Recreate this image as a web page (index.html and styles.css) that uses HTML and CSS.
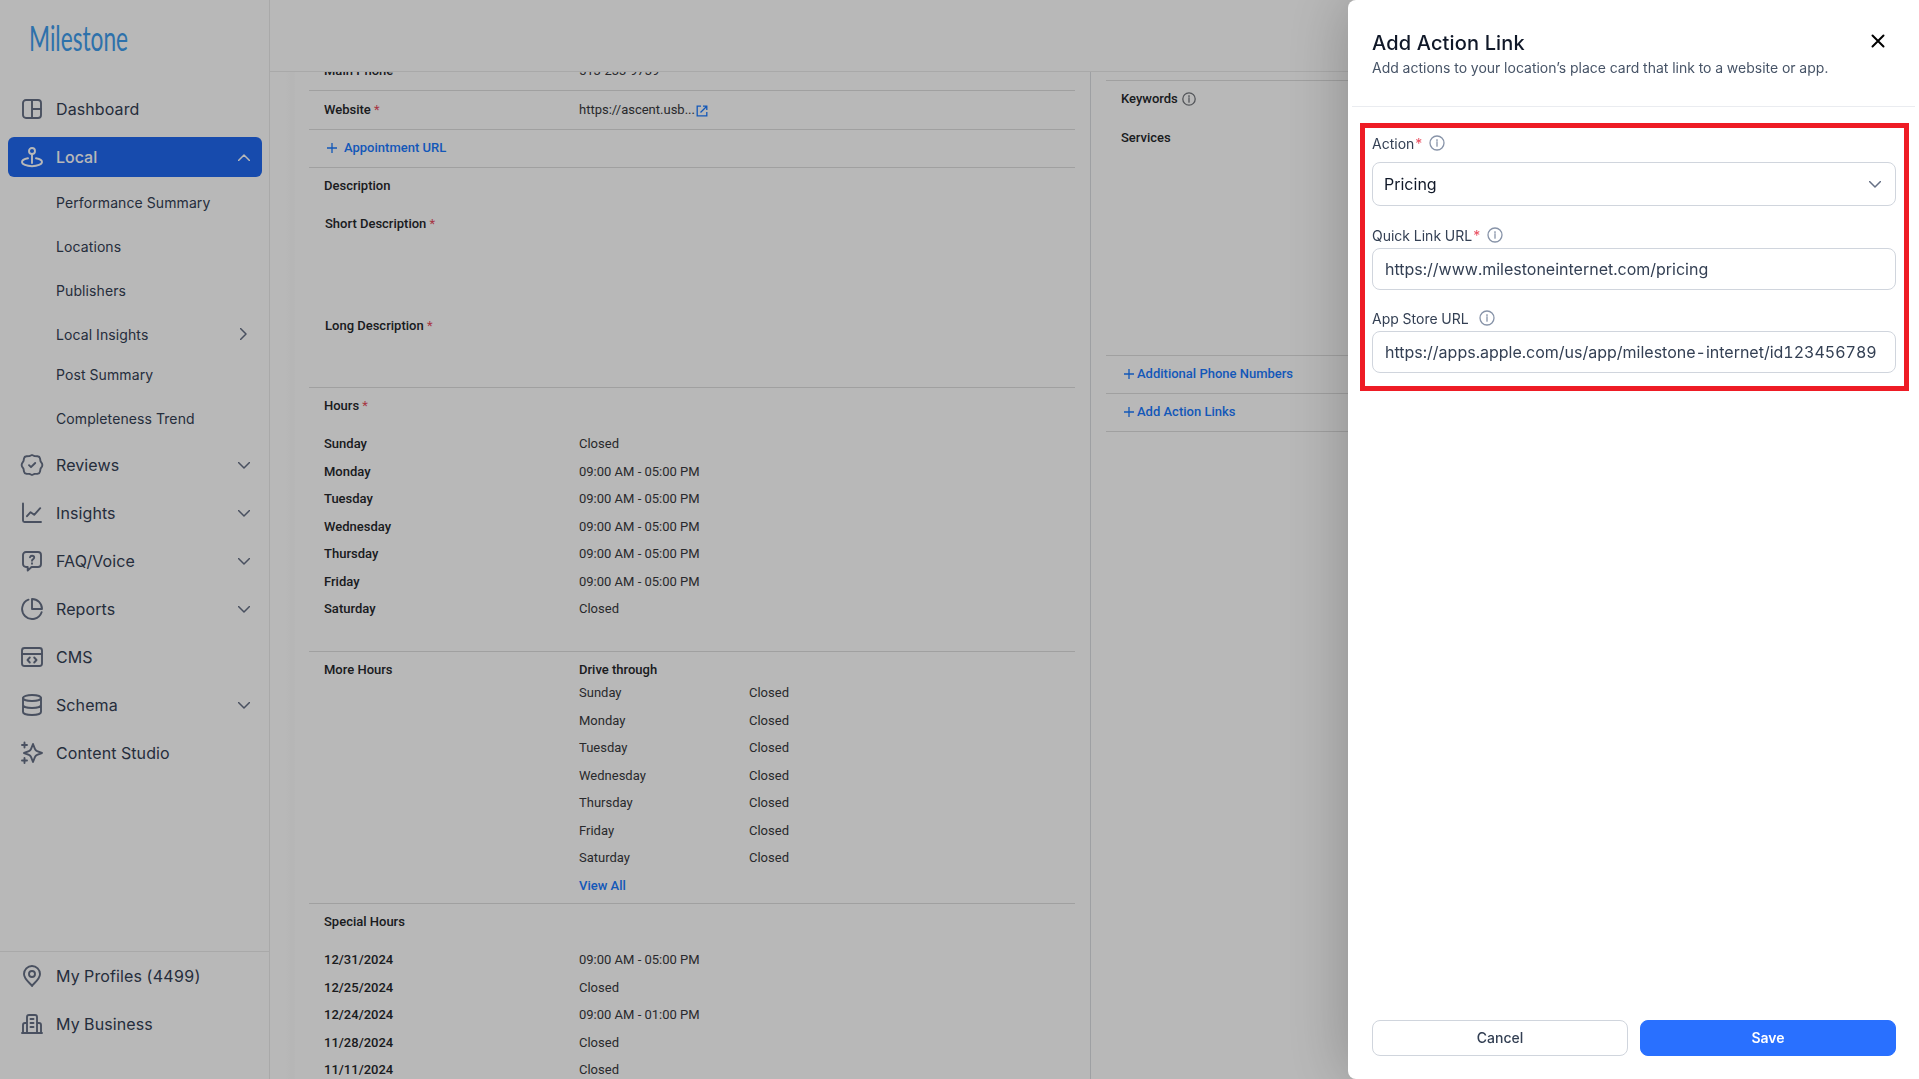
FILE: index.html
```html
<!DOCTYPE html>
<html lang="en">
<head>
<meta charset="utf-8">
<title>Add Action Link</title>
<link rel="stylesheet" href="styles.css">
</head>
<body>
<div class="app">
  <aside class="sidebar">
    <svg class="logo" width="110" height="44" viewBox="0 0 110 44">
      <text x="1" y="32" font-size="34" textLength="99" lengthAdjust="spacingAndGlyphs">Milestone</text>
    </svg>

    <nav class="nav">
      <a class="nav-item">
        <svg class="icon" viewBox="0 0 24 24"><rect x="3" y="3" width="18" height="18" rx="3"/><path d="M12 3v18M12 12h9"/></svg>
        <span>Dashboard</span>
      </a>
      <a class="nav-item active">
        <svg class="icon" viewBox="0 0 24 24"><circle cx="12" cy="6" r="3"/><path d="M12 9v9M8 13.3C4.500 13.900 2 15.300 2 17c0 2.300 4.500 4.200 10 4.200s10-1.900 10-4.200c0-1.700-2.500-3.100-6-3.700"/></svg>
        <span>Local</span>
        <svg class="chevron" viewBox="0 0 12 7"><path d="M.5 6.500l5.500-5.500 5.500 5.500"/></svg>
      </a>
      <div class="subnav">
        <a>Performance Summary</a>
        <a>Locations</a>
        <a>Publishers</a>
        <a class="has-more">Local Insights <svg class="chevron-right" viewBox="0 0 7 12"><path d="M.5.5L6 6 .5 11.500"/></svg></a>
        <a>Post Summary</a>
        <a>Completeness Trend</a>
      </div>
      <a class="nav-item">
        <svg class="icon" viewBox="0 0 24 24"><path d="M9 12.200l2 2 4.200-4.200M12 2l2.600 1.100 2.900.1c1.200.1 2.300 1 2.500 2.200l.5 2.800L22 10.500c.5 1 .5 2 0 3l-1.500 2.300-.5 2.800c-.2 1.200-1.300 2.100-2.500 2.200l-2.900.1L12 22l-2.600-1.100-2.900-.1c-1.200-.1-2.300-1-2.500-2.200l-.5-2.800L2 13.500c-.5-1-.5-2 0-3l1.500-2.400L4 5.300c.2-1.200 1.300-2 2.500-2.100l2.900-.1z"/></svg>
        <span>Reviews</span>
        <svg class="chevron" viewBox="0 0 12 7"><path d="M.5.5L6 6l5.500-5.500"/></svg>
      </a>
      <a class="nav-item">
        <svg class="icon" viewBox="0 0 24 24"><path d="M3 2.500V19.500a1.500 1.500 0 0 0 1.500 1.500H21M7 15.200l3.600-4 3.600 2.600 6-6.600"/></svg>
        <span>Insights</span>
        <svg class="chevron" viewBox="0 0 12 7"><path d="M.5.5L6 6l5.500-5.500"/></svg>
      </a>
      <a class="nav-item">
        <svg class="icon" viewBox="0 0 24 24"><path d="M6 3h12a3 3 0 0 1 3 3v9a3 3 0 0 1-3 3h-6.500L7.700 21.600V18H6a3 3 0 0 1-3-3V6a3 3 0 0 1 3-3z"/><path d="M10 8.300C10.300 7.200 11 6.700 12 6.700c1.200 0 2.200.8 2.200 1.900 0 1.600-2.200 1.800-2.200 3.200M12 14.300v.4"/></svg>
        <span>FAQ/Voice</span>
        <svg class="chevron" viewBox="0 0 12 7"><path d="M.5.5L6 6l5.500-5.500"/></svg>
      </a>
      <a class="nav-item">
        <svg class="icon" viewBox="0 0 24 24"><path d="M8.500 2.700A10 10 0 1 0 21.600 15.200M12 2a10 10 0 0 1 10 10H12z"/></svg>
        <span>Reports</span>
        <svg class="chevron" viewBox="0 0 12 7"><path d="M.5.5L6 6l5.500-5.500"/></svg>
      </a>
      <a class="nav-item">
        <svg class="icon" viewBox="0 0 24 24"><rect x="2" y="3" width="20" height="18" rx="2.500"/><path d="M2 9h20M9.800 12.500L7.500 15l2.300 2.500M14.200 12.500l2.300 2.500-2.300 2.500"/></svg>
        <span>CMS</span>
      </a>
      <a class="nav-item">
        <svg class="icon" viewBox="0 0 24 24"><ellipse cx="12" cy="5" rx="9" ry="3"/><path d="M3 5v14c0 1.700 4 3 9 3s9-1.300 9-3V5M3 12c0 1.700 4 3 9 3s9-1.300 9-3"/></svg>
        <span>Schema</span>
        <svg class="chevron" viewBox="0 0 12 7"><path d="M.5.5L6 6l5.500-5.500"/></svg>
      </a>
      <a class="nav-item">
        <svg class="icon" viewBox="0 0 24 24"><path d="M4.500 1.500v5M2 4h5M4.500 17v5M2 19.500h5M13 3l1.900 4.900c.5 1.300.9 1.700 2.200 2.200L22 12l-4.900 1.900c-1.300.5-1.700.9-2.200 2.200L13 21l-1.900-4.900c-.5-1.300-.9-1.700-2.200-2.200L4 12l4.900-1.900c1.300-.5 1.700-.9 2.200-2.200z"/></svg>
        <span>Content Studio</span>
      </a>
    </nav>

    <div class="nav nav-bottom">
      <a class="nav-item">
        <svg class="icon" viewBox="0 0 24 24"><circle cx="12" cy="10" r="3"/><path d="M12 22c-1-2.200-8-6.500-8-12a8 8 0 0 1 16 0c0 5.500-7 9.800-8 12z"/></svg>
        <span>My Profiles (4499)</span>
      </a>
      <a class="nav-item">
        <svg class="icon" viewBox="0 0 24 24"><path d="M2 21h20M7 21V5a2 2 0 0 1 2-2h6a2 2 0 0 1 2 2v16M7 11H5a2 2 0 0 0-2 2v8M17 11h2a2 2 0 0 1 2 2v8M10.500 7h3M10.500 11h3M10.500 15h3"/></svg>
        <span>My Business</span>
      </a>
    </div>
  </aside>

  <div class="page">
    <header class="topbar"></header>
    <main class="content">
      <section class="details">
        <div class="row first"><b>Main Phone</b><span>513-233-9739</span></div>
        <div class="row"><b>Website <i>*</i></b><span class="website">https://ascent.usb...<svg viewBox="0 0 12 12"><path d="M5 1.200H1.200v9.600h9.600V7M7 1.200h3.800V5M10.800 1.200L4.500 7.500"/></svg></span></div>
        <div class="row short"><a class="link"><svg class="plus" viewBox="0 0 10 10"><path d="M5 0v10M0 5h10"/></svg>Appointment URL</a></div>

        <div class="section description">
          <b>Description</b>
          <b class="short-desc">Short Description <i>*</i></b>
          <b class="long-desc">Long Description <i>*</i></b>
        </div>

        <div class="section hours">
          <b class="heading">Hours <i>*</i></b>
          <div class="day"><b>Sunday</b><span>Closed</span></div>
          <div class="day"><b>Monday</b><span>09:00 AM - 05:00 PM</span></div>
          <div class="day"><b>Tuesday</b><span>09:00 AM - 05:00 PM</span></div>
          <div class="day"><b>Wednesday</b><span>09:00 AM - 05:00 PM</span></div>
          <div class="day"><b>Thursday</b><span>09:00 AM - 05:00 PM</span></div>
          <div class="day"><b>Friday</b><span>09:00 AM - 05:00 PM</span></div>
          <div class="day"><b>Saturday</b><span>Closed</span></div>
        </div>

        <div class="section more-hours">
          <b class="heading">More Hours</b>
          <div class="drive">
            <b>Drive through</b>
            <div class="drive-day"><span>Sunday</span><span>Closed</span></div>
            <div class="drive-day"><span>Monday</span><span>Closed</span></div>
            <div class="drive-day"><span>Tuesday</span><span>Closed</span></div>
            <div class="drive-day"><span>Wednesday</span><span>Closed</span></div>
            <div class="drive-day"><span>Thursday</span><span>Closed</span></div>
            <div class="drive-day"><span>Friday</span><span>Closed</span></div>
            <div class="drive-day"><span>Saturday</span><span>Closed</span></div>
            <div class="drive-day"><a class="link">View All</a></div>
          </div>
        </div>

        <div class="section special">
          <b class="heading">Special Hours</b>
          <div class="day"><b>12/31/2024</b><span>09:00 AM - 05:00 PM</span></div>
          <div class="day"><b>12/25/2024</b><span>Closed</span></div>
          <div class="day"><b>12/24/2024</b><span>09:00 AM - 01:00 PM</span></div>
          <div class="day"><b>11/28/2024</b><span>Closed</span></div>
          <div class="day"><b>11/11/2024</b><span>Closed</span></div>
        </div>
      </section>

      <section class="extras">
        <div class="extras-top"></div>
        <div class="keywords">
          <b>Keywords <svg class="info" viewBox="0 0 14 14"><circle cx="7" cy="7" r="6.200"/><path d="M7 6.200v4M7 3.600v1.300"/></svg></b>
          <b>Services</b>
        </div>
        <div class="extras-row"><a class="link"><svg class="plus" viewBox="0 0 10 10"><path d="M5 0v10M0 5h10"/></svg>Additional Phone Numbers</a></div>
        <div class="extras-row"><a class="link"><svg class="plus" viewBox="0 0 10 10"><path d="M5 0v10M0 5h10"/></svg>Add Action Links</a></div>
      </section>
    </main>
  </div>
</div>

<div class="overlay"></div>

<div class="drawer">
  <div class="drawer-header">
    <div>
      <h2>Add Action Link</h2>
      <p>Add actions to your location’s place card that link to a website or app.</p>
    </div>
    <svg class="close" viewBox="0 0 14 14"><path d="M1.500 1.500l11 11M12.500 1.500l-11 11"/></svg>
  </div>

  <div class="highlight">
    <label>Action<i>*</i><svg class="info" viewBox="0 0 16 16"><circle cx="8" cy="8" r="7"/><path d="M8 7.200v4M8 4.700v1.200"/></svg></label>
    <div class="select">Pricing<svg class="chevron" viewBox="0 0 12 7"><path d="M.5.5L6 6l5.500-5.500"/></svg></div>
    <label class="quick">Quick Link URL<i>*</i><svg class="info" viewBox="0 0 16 16"><circle cx="8" cy="8" r="7"/><path d="M8 7.200v4M8 4.700v1.200"/></svg></label>
    <input type="text" value="https://www.milestoneinternet.com/pricing">
    <label class="store">App Store URL<svg class="info" viewBox="0 0 16 16"><circle cx="8" cy="8" r="7"/><path d="M8 7.200v4M8 4.700v1.200"/></svg></label>
    <input type="text" value="https://apps.apple.com/us/app/milestone-internet/id123456789">
  </div>

  <div class="drawer-footer">
    <button class="cancel">Cancel</button>
    <button class="save">Save</button>
  </div>
</div>
</body>
</html>
```

FILE: styles.css
```css
* {
  box-sizing: border-box;
}

body {
  margin: 0;
  height: 100vh;
  overflow: hidden;
  font-family: Inter, sans-serif;
  font-variant-numeric: tabular-nums;
  color: #344054;
  background: #fff;
}

svg {
  fill: none;
  stroke: currentColor;
  stroke-width: 1.5;
  stroke-linecap: round;
  stroke-linejoin: round;
  flex: none;
}

i {
  font-style: normal;
  font-weight: 400;
  color: #e84a5c;
}

.app {
  display: flex;
  height: 100vh;
}

/* Sidebar */
.sidebar {
  display: flex;
  flex-direction: column;
  width: 270px;
  border-right: 1px solid #ebebeb;
}

.logo {
  margin: 19px 0 26px 28px;
  font-family: Lato, sans-serif;
}

.logo text {
  fill: #3f9dee;
  stroke: none;
}

.nav {
  padding: 0 7px 0 8px;
}

.nav-item {
  display: flex;
  align-items: center;
  height: 40px;
  margin-bottom: 8px;
  padding: 0 12px;
  border-radius: 6px;
  font-size: 16px;
  letter-spacing: 0.1px;
}

.nav-item .icon {
  width: 24px;
  height: 24px;
  margin-right: 12px;
  color: #667085;
  stroke-width: 1.9;
}

.nav-item.active {
  background: #2169f0;
  color: #fff;
  font-weight: 500;
  letter-spacing: 0;
  margin-bottom: 6px;
}

.nav-item.active .icon,
.nav-item.active .chevron {
  color: #fff;
}

.chevron {
  width: 12px;
  height: 7px;
  margin-left: auto;
  color: #667085;
}

.subnav {
  padding-bottom: 2px;
}

.subnav a {
  display: flex;
  align-items: center;
  height: 40px;
  margin-bottom: 4px;
  padding: 0 15px 2px 48px;
  font-size: 14px;
  letter-spacing: 0.1px;
}

.subnav .has-more {
  margin-bottom: 0;
}

.chevron-right {
  width: 7px;
  height: 12px;
  margin-left: auto;
  color: #667085;
}

.nav-bottom {
  margin-top: auto;
  height: 128px;
  padding-top: 4px;
  border-top: 1px solid #ebebeb;
}

/* Page */
.page {
  flex: 1;
  display: flex;
  flex-direction: column;
}

.topbar {
  height: 72px;
  flex: none;
  border-bottom: 1px solid #ebebeb;
}

.content {
  flex: 1;
  display: flex;
  overflow: hidden;
  padding-left: 24px;
  font-family: Roboto, sans-serif;
  font-size: 13px;
  line-height: 20px;
  color: #38393d;
  background: linear-gradient(90deg, #fff 15px, #fcfcfc 24px, #fff 25px);
}

.content b {
  font-weight: 500;
  color: #26282c;
}

.details {
  width: 797px;
  padding: 0 15px;
  border-right: 1px solid #dcdee2;
}

.row {
  display: flex;
  align-items: center;
  height: 39px;
  padding-left: 15px;
  border-bottom: 1px solid #dedede;
}

.row.first {
  margin-top: -20px;
}

.row.short {
  height: 38px;
  padding-bottom: 1px;
}

.row b,
.day b {
  width: 255px;
}

.website {
  display: flex;
  align-items: center;
}

.website svg {
  width: 12px;
  height: 12px;
  margin: 2px 0 0 1px;
  color: #1a7aff;
  stroke-width: 1.300;
  stroke-linecap: butt;
  stroke-linejoin: miter;
}

.link {
  display: flex;
  align-items: center;
  font-weight: 500;
  color: #1a7aff;
}

.plus {
  width: 10px;
  height: 10px;
  margin: 0 7px 0 3px;
  stroke-width: 1.3;
  stroke-linecap: butt;
}

.section {
  padding: 8px 0 0 15px;
  border-bottom: 1px solid #dedede;
}

.description {
  display: flex;
  flex-direction: column;
  height: 220px;
}

.short-desc {
  margin: 18px 0 0 1px;
}

.long-desc {
  margin: 82px 0 0 1px;
}

.heading {
  display: block;
  margin-bottom: 14.5px;
}

.hours {
  height: 264px;
}

.day,
.drive-day {
  display: flex;
  align-items: center;
  height: 27.5px;
}

.more-hours {
  display: flex;
  height: 252px;
}

.more-hours .heading {
  width: 255px;
}

.drive > b {
  display: block;
  height: 19.5px;
}

.drive-day span:first-child {
  width: 170px;
}

.extras {
  flex: 1;
  padding-left: 15px;
}

.extras-top {
  height: 9px;
  border-bottom: 1px solid #dedede;
}

.keywords {
  display: flex;
  flex-direction: column;
  gap: 19px;
  height: 275px;
  padding: 8px 0 0 15px;
  border-bottom: 1px solid #dedede;
}

.keywords b {
  display: flex;
  align-items: center;
}

.keywords .info {
  width: 14px;
  height: 14px;
  margin-left: 4px;
  color: #74777d;
  stroke-width: 1.3;
}

.extras-row {
  display: flex;
  height: 38px;
  padding: 0 0 1px 15px;
  border-bottom: 1px solid #dedede;
}

.extras-row .plus {
  margin-right: 3px;
}

.overlay {
  position: fixed;
  inset: 0;
  background: rgba(0, 0, 0, 0.28);
}

/* Drawer */
.drawer {
  position: fixed;
  top: 0;
  right: 0;
  bottom: 0;
  display: flex;
  flex-direction: column;
  width: 571px;
  padding: 0 4px;
  border-radius: 8px 0 0 8px;
  background: #fff;
  box-shadow: 0 0 64px rgba(0, 0, 0, 0.25);
}

.drawer-header {
  display: flex;
  justify-content: space-between;
  height: 107px;
  padding: 28px 30px 0 20px;
  border-bottom: 1px solid #eaecf0;
}

.drawer-header h2 {
  margin: 0;
  font-size: 20px;
  font-weight: 500;
  line-height: 30px;
  letter-spacing: 0.15px;
  color: #101828;
}

.drawer-header p {
  margin: 0;
  font-size: 14px;
  line-height: 20px;
  color: #475467;
}

.close {
  width: 14px;
  height: 14px;
  margin-top: 6px;
  color: #000;
  stroke-width: 2;
}

.highlight {
  width: 549px;
  height: 268px;
  margin: 16px 0 0 8px;
  padding: 5px 8px 0 7px;
  border: 5px solid #ee1c25;
}

.highlight label {
  display: flex;
  align-items: center;
  height: 20px;
  font-size: 14px;
}

.highlight label .info {
  width: 16px;
  height: 16px;
  margin: 0 0 0 6px;
  color: #8793a8;
  stroke-width: 1.3;
}

.highlight .quick {
  margin-top: 19px;
}

.highlight .store {
  margin-top: 18px;
}

.highlight .store .info {
  margin-left: 10px;
}

.select,
.highlight input {
  display: flex;
  align-items: center;
  width: 524px;
  height: 42px;
  margin-top: 3px;
  padding: 0 12px;
  border: 1px solid #d0d5dd;
  border-radius: 8px;
  font-family: Inter, sans-serif;
  font-size: 16px;
  font-variant-numeric: tabular-nums;
  color: #344054;
  background: #fff;
}

.select {
  height: 44px;
  margin-top: 9px;
  padding: 0 14px 0 11px;
  color: #101828;
}

.drawer-footer {
  display: flex;
  gap: 12px;
  margin: auto 0 23px 20px;
}

.drawer-footer button {
  width: 256px;
  height: 36px;
  padding: 0 0 2px;
  border: 1px solid #d0d5dd;
  border-radius: 8px;
  font-family: Inter, sans-serif;
  font-size: 14px;
  font-weight: 500;
  color: #344054;
  background: #fff;
}

.drawer-footer .save {
  border-color: #2970ff;
  font-weight: 600;
  color: #fff;
  background: #2970ff;
}
```
